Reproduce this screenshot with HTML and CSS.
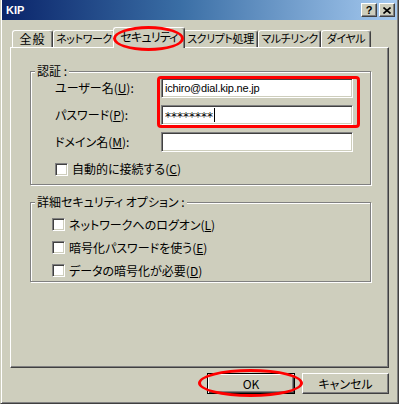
FILE: index.html
```html
<!DOCTYPE html>
<html lang="ja">
<head>
    <meta charset="UTF-8">
    <title>KIP</title>
    <link rel="stylesheet" href="styles.css">
</head>
<body>
    <div class="window">
        <div class="titlebar">
            <span class="title">KIP</span>
            <div class="title-buttons">
                <span class="tbtn tbtn-help">?</span>
                <span class="tbtn tbtn-close">
                    <svg width="8" height="7" viewBox="0 0 8 7"><path d="M0.5 0.5 L7.5 6.5 M7.5 0.5 L0.5 6.5" stroke="#000" stroke-width="1.6"/></svg>
                </span>
            </div>
        </div>

        <div class="tabs">
            <div class="tab tab-general">全般</div>
            <div class="tab tab-network">ネットワーク</div>
            <div class="tab tab-security active">セキュリティ</div>
            <div class="tab tab-script">スクリプト処理</div>
            <div class="tab tab-multilink">マルチリンク</div>
            <div class="tab tab-dial">ダイヤル</div>
        </div>

        <div class="panel">
            <div class="group group-auth">
                <span class="group-title">認証 :</span>
                <div class="form-grid">
                    <label class="field-label">ユーザー名(<u>U</u>):</label>
                    <div class="textbox textbox-latin">ichiro@dial.kip.ne.jp</div>
                    <label class="field-label">パスワード(<u>P</u>):</label>
                    <div class="textbox textbox-secret">********<span class="caret"></span></div>
                    <label class="field-label">ドメイン名(<u>M</u>):</label>
                    <div class="textbox"></div>
                    <div class="check-row span-all">
                        <span class="checkbox"></span>
                        <span>自動的に接続する(<u>C</u>)</span>
                    </div>
                </div>
            </div>

            <div class="group group-options">
                <span class="group-title">詳細セキュリティ オプション :</span>
                <div class="check-list">
                    <div class="check-row">
                        <span class="checkbox"></span>
                        <span>ネットワークへのログオン(<u>L</u>)</span>
                    </div>
                    <div class="check-row">
                        <span class="checkbox"></span>
                        <span>暗号化パスワードを使う(<u>E</u>)</span>
                    </div>
                    <div class="check-row">
                        <span class="checkbox"></span>
                        <span>データの暗号化が必要(<u>D</u>)</span>
                    </div>
                </div>
            </div>
        </div>

        <div class="button-row">
            <button class="btn btn-default">OK</button>
            <button class="btn btn-cancel">キャンセル</button>
        </div>

        <!-- red annotation marks -->
        <div class="mark mark-tab"></div>
        <div class="mark mark-fields"></div>
        <div class="mark mark-ok"></div>
    </div>
</body>
</html>
```

FILE: styles.css
```css
* {
    box-sizing: border-box;
    margin: 0;
    padding: 0;
}
body {
    width: 399px;
    height: 404px;
    overflow: hidden;
    background-color: #cecebd;
    font-family: "Noto Sans CJK JP", sans-serif;
    font-size: 12px;
    line-height: 14px;
    font-feature-settings: "palt";
    color: #000;
}
u {
    text-decoration-thickness: 1px;
    text-underline-offset: 1px;
}
.window {
    position: relative;
    width: 399px;
    height: 404px;
    background-color: #cecebd;
    border-left: 1px solid #cecebd;
    border-right: 1px solid #404040;
    border-bottom: 1px solid #404040;
    box-shadow: inset 1px 0 #fff, inset -1px -1px #808080;
}
.titlebar {
    height: 20px;
    margin: 0 1px;
    padding: 0 2px 0 4px;
    background: linear-gradient(to right, #0a246a 0%, #3a6ea5 45%, #a6caf0 100%);
    display: flex;
    align-items: center;
    justify-content: space-between;
}
.title {
    color: #fff;
    font-family: "Liberation Sans", sans-serif;
    font-weight: bold;
    font-size: 11px;
}
.title-buttons {
    display: flex;
    gap: 2px;
}
.tbtn {
    width: 16px;
    height: 14px;
    background-color: #cecebd;
    border: 1px solid;
    border-color: #fff #404040 #404040 #fff;
    box-shadow: inset -1px -1px #808080;
    display: flex;
    align-items: center;
    justify-content: center;
    font-family: "Liberation Sans", sans-serif;
    font-weight: bold;
    font-size: 11px;
    line-height: 11px;
}
.tabs {
    position: relative;
    z-index: 1;
    height: 27px;
    padding: 10px 0 0 11px;
    display: flex;
    align-items: flex-end;
}
.tab {
    height: 17px;
    border-top: 1px solid #fff;
    border-left: 1px solid #fff;
    border-right: 1px solid #404040;
    border-radius: 3px 3px 0 0;
    box-shadow: inset -1px 0 #808080;
    background-color: #cecebd;
    text-align: center;
    font-size: 11px;
    line-height: 15px;
    letter-spacing: -0.4px;
    white-space: nowrap;
    overflow: hidden;
}
.tab-general { width: 41px; font-size: 12px; letter-spacing: 1px; }
.tab-network { width: 62px; }
.tab-security { width: 72px; font-size: 12px; letter-spacing: -0.8px; }
.tab-script { width: 75px; }
.tab-multilink { width: 63px; }
.tab-dial { width: 50px; }
.tab.active {
    height: 21px;
    margin: 0 -2px -1px;
    line-height: 17px;
    position: relative;
}
.panel {
    margin-left: 9px;
    width: 379px;
    height: 321px;
    border: 1px solid;
    border-color: #fff #404040 #404040 #fff;
    box-shadow: inset -1px -1px #808080;
    padding-left: 19px;
    padding-top: 23px;
}
.group {
    position: relative;
    width: 341px;
    border: 1px solid #808080;
    box-shadow: inset 1px 1px #fff, 1px 1px #fff;
}
.group-title {
    position: absolute;
    top: -8px;
    left: 4px;
    padding: 0 2px;
    background-color: #cecebd;
    white-space: nowrap;
}
.group-auth {
    padding: 6px 0 5px 24px;
}
.form-grid {
    display: grid;
    grid-template-columns: 106px 192px;
    grid-auto-rows: 20px;
    row-gap: 7px;
    align-items: center;
}
.form-grid .check-row {
    height: 14px;
}
.span-all {
    grid-column: 1 / -1;
}
.field-label {
    white-space: nowrap;
}
.textbox {
    height: 20px;
    background-color: #fff;
    border: 1px solid;
    border-color: #808080 #fff #fff #808080;
    box-shadow: inset 1px 1px #404040, inset -1px -1px #cecebd;
    padding-left: 3px;
    line-height: 18px;
    white-space: nowrap;
    display: flex;
    align-items: center;
}
.textbox-latin {
    font-family: "Liberation Sans", sans-serif;
    font-size: 11px;
    letter-spacing: -0.2px;
}
.textbox-secret {
    font-family: "DejaVu Sans", sans-serif;
    font-size: 12px;
    padding-top: 3px;
}
.caret {
    display: inline-block;
    width: 1px;
    height: 14px;
    background-color: #000;
    margin: -3px 0 0 1px;
}
.group-options {
    margin-top: 17px;
    padding: 14px 0 3px 21px;
}
.check-list {
    display: flex;
    flex-direction: column;
    gap: 8px;
}
.check-row {
    display: flex;
    align-items: center;
    gap: 4px;
    height: 15px;
    white-space: nowrap;
}
.checkbox {
    width: 13px;
    height: 13px;
    flex-shrink: 0;
    background-color: #fff;
    border: 1px solid;
    border-color: #808080 #fff #fff #808080;
    box-shadow: inset 1px 1px #404040, inset -1px -1px #cecebd;
}
.button-row {
    display: flex;
    justify-content: flex-end;
    gap: 7px;
    margin-top: 5px;
    padding-right: 9px;
}
.btn {
    height: 21px;
    background-color: #cecebd;
    font-family: "Noto Sans CJK JP", sans-serif;
    font-size: 12px;
    font-feature-settings: "palt";
    color: #000;
}
.btn-default {
    width: 88px;
    border: 1px solid #000;
    box-shadow: inset 1px 1px #fff, inset -1px -1px #404040, inset -2px -2px #808080;
}
.btn-cancel {
    width: 87px;
    border: 1px solid;
    border-color: #fff #404040 #404040 #fff;
    box-shadow: inset -1px -1px #808080;
}
.mark {
    position: absolute;
    border: 3px solid #f00;
    z-index: 5;
}
.mark-tab {
    left: 112px;
    top: 26px;
    width: 71px;
    height: 25px;
    border-radius: 50%;
}
.mark-fields {
    left: 156px;
    top: 76px;
    width: 203px;
    height: 52px;
    border-radius: 4px;
}
.mark-ok {
    left: 197px;
    top: 369px;
    width: 105px;
    height: 28px;
    border-radius: 50%;
}
```
